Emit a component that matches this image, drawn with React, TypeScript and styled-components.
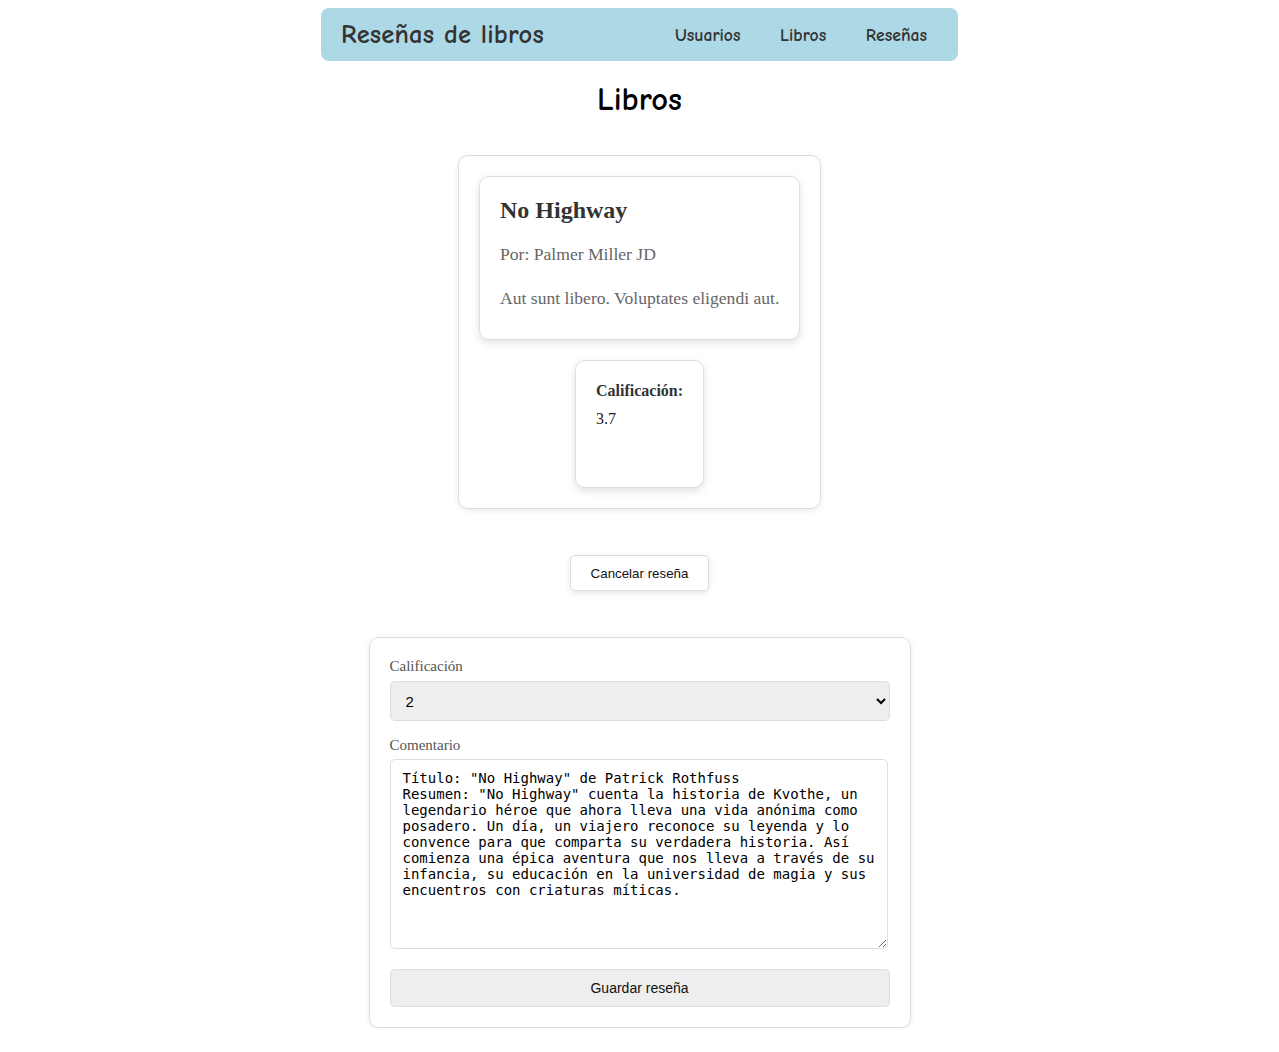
import React from "react";
import styled, { createGlobalStyle } from "styled-components";

const Global = createGlobalStyle`
  body {
    margin: 8px;
    background: #ffffff;
    font-family: "Liberation Serif", "Times New Roman", serif;
  }
`;

const Page = styled.div`
  display: flex;
  flex-direction: column;
  align-items: center;
`;

const NavBar = styled.nav`
  box-sizing: border-box;
  width: 637px;
  height: 53px;
  background: #add8e6;
  border-radius: 8px;
  display: flex;
  align-items: center;
  justify-content: space-between;
  padding: 0 31px 0 20px;
`;

const Brand = styled.div`
  font-family: "Comic Sans MS", "Comic Neue", "Lato", sans-serif;
  font-weight: 700;
  font-size: 26.5px;
  color: #333;
  letter-spacing: 0.2px;
`;

const NavLinks = styled.div`
  display: flex;
  gap: 39.5px;
`;

const NavLink = styled.a`
  font-family: "Comic Sans MS", "Comic Neue", "Lato", sans-serif;
  font-weight: 700;
  font-size: 17.7px;
  color: #333;
  text-decoration: none;
`;

const Heading = styled.h1`
  font-family: "Comic Sans MS", "Comic Neue", "Lato", sans-serif;
  font-weight: 700;
  font-size: 32.5px;
  color: #000;
  margin: 20px 0 36px;
  line-height: 38px;
`;

const Card = styled.div<{ $width?: number }>`
  box-sizing: border-box;
  background: #fff;
  border: 1px solid #ddd;
  border-radius: 10px;
  box-shadow: 0 2px 6px rgba(0, 0, 0, 0.08);
  padding: 20px;
  ${(p) => (p.$width ? `width: ${p.$width}px;` : "")}
`;

const BookWrap = styled(Card)`
  display: flex;
  flex-direction: column;
  align-items: center;
  gap: 20px;
`;

const BookCard = styled.div`
  box-sizing: border-box;
  width: 321px;
  border: 1px solid #ddd;
  border-radius: 10px;
  box-shadow: 0 3px 8px rgba(0, 0, 0, 0.12);
  padding: 19px 20px 20px;
`;

const BookTitle = styled.h3`
  margin: 0 0 20px;
  font-size: 24px;
  line-height: 28px;
  color: #333;
`;

const BookText = styled.p<{ $last?: boolean }>`
  margin: 0 0 ${(p) => (p.$last ? "11px" : "24px")};
  font-size: 17.6px;
  line-height: 20px;
  color: #666;
  white-space: nowrap;
`;

const RatingCard = styled.div`
  box-sizing: border-box;
  height: 128px;
  border: 1px solid #ddd;
  border-radius: 10px;
  box-shadow: 0 3px 8px rgba(0, 0, 0, 0.12);
  padding: 21px 20px 20px;
  color: #333;
  font-size: 16px;
`;

const RatingLabel = styled.div`
  font-weight: 700;
  line-height: 18px;
  margin-bottom: 10px;
`;

const RatingValue = styled.div`
  line-height: 18px;
  color: #222;
`;

const Button = styled.button<{ $wide?: boolean }>`
  box-sizing: border-box;
  font-family: "Liberation Sans", Arial, sans-serif;
  color: #111;
  border: 1px solid #ddd;
  border-radius: 5px;
  cursor: pointer;
  ${(p) =>
    p.$wide
      ? `width: 100%; height: 38px; background: #eee; font-size: 14px; margin-top: 20px;`
      : `height: 36px; padding: 0 20px; background: #fff; font-size: 13.33px; box-shadow: 0 2px 6px rgba(0,0,0,0.1); margin: 46px 0 46px;`}
`;

const Form = styled(Card)`
  display: flex;
  flex-direction: column;
`;

const Label = styled.label<{ $gapTop?: number }>`
  font-size: 15px;
  line-height: 17px;
  color: #555;
  margin-top: ${(p) => p.$gapTop ?? 0}px;
  margin-bottom: ${(p) => (p.$gapTop ? 5 : 6)}px;
`;

const Select = styled.select`
  box-sizing: border-box;
  width: 100%;
  height: 40px;
  background: #eee;
  border: 1px solid #ddd;
  border-radius: 5px;
  padding: 0 11px;
  font-family: "Liberation Sans", Arial, sans-serif;
  font-size: 15px;
  color: #000;
`;

const TextArea = styled.textarea`
  box-sizing: border-box;
  width: 498px;
  height: 190px;
  border: 1px solid #ddd;
  border-radius: 5px;
  padding: 10px 12px;
  font-family: "DejaVu Sans Mono", monospace;
  font-size: 14px;
  line-height: 16px;
  color: #000;
  resize: both;
`;

const comment = `Título: "No Highway" de Patrick Rothfuss
Resumen: "No Highway" cuenta la historia de Kvothe, un legendario héroe que ahora lleva una vida anónima como posadero. Un día, un viajero reconoce su leyenda y lo convence para que comparta su verdadera historia. Así comienza una épica aventura que nos lleva a través de su infancia, su educación en la universidad de magia y sus encuentros con criaturas míticas.`;

export default function App() {
  return (
    <Page>
      <Global />
      <NavBar>
        <Brand>Reseñas de libros</Brand>
        <NavLinks>
          <NavLink>Usuarios</NavLink>
          <NavLink>Libros</NavLink>
          <NavLink>Reseñas</NavLink>
        </NavLinks>
      </NavBar>
      <Heading>Libros</Heading>
      <BookWrap $width={363}>
        <BookCard>
          <BookTitle>No Highway</BookTitle>
          <BookText>Por: Palmer Miller JD</BookText>
          <BookText $last>Aut sunt libero. Voluptates eligendi aut.</BookText>
        </BookCard>
        <RatingCard>
          <RatingLabel>Calificación:</RatingLabel>
          <RatingValue>3.7</RatingValue>
        </RatingCard>
      </BookWrap>
      <Button>Cancelar reseña</Button>
      <Form $width={542}>
        <Label>Calificación</Label>
        <Select defaultValue="2">
          <option value="1">1</option>
          <option value="2">2</option>
          <option value="3">3</option>
          <option value="4">4</option>
          <option value="5">5</option>
        </Select>
        <Label $gapTop={16}>Comentario</Label>
        <TextArea defaultValue={comment} />
        <Button $wide>Guardar reseña</Button>
      </Form>
    </Page>
  );
}
